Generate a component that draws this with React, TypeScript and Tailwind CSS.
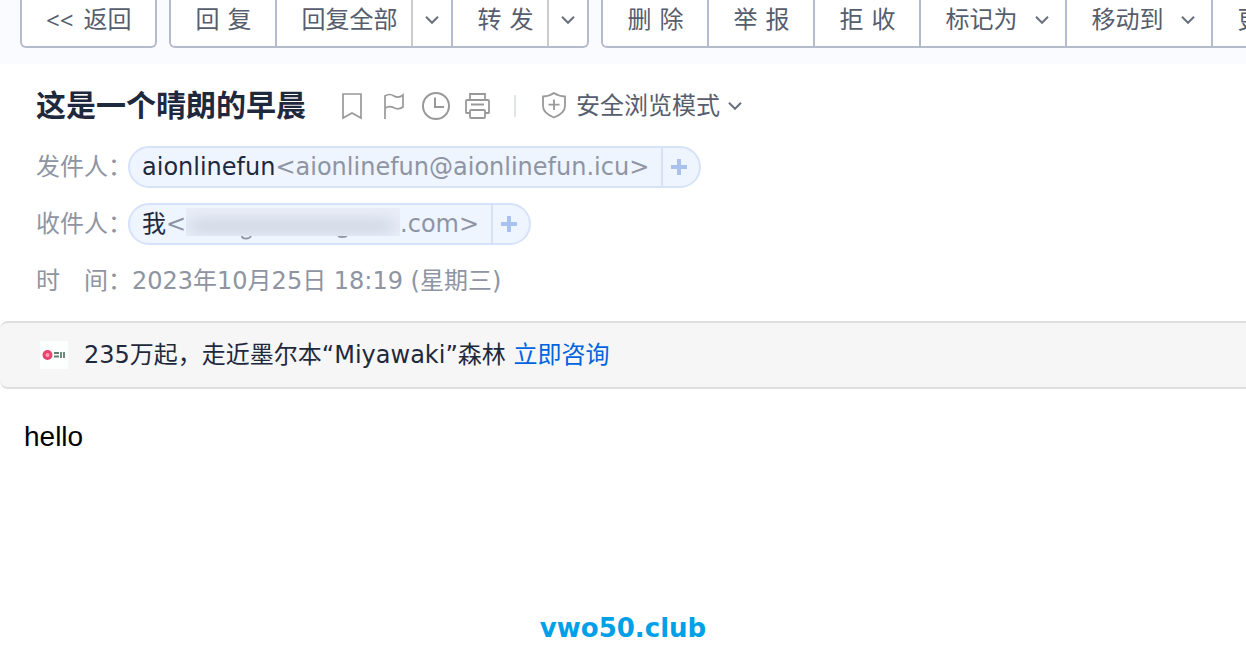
import type { ReactNode } from 'react';

function Chevron() {
  return (
    <svg className="w-3.5 h-2.5 shrink-0" viewBox="0 0 14 10" fill="none" stroke="#697080" strokeWidth={2}>
      <path d="M1 1.8l6 6 6-6" />
    </svg>
  );
}

// Two-character labels are spread apart with a gap
function Label({ text }: { text: string }) {
  return (
    <span className="flex gap-2">
      {text.split(' ').map(part => (
        <span key={part}>{part}</span>
      ))}
    </span>
  );
}

function ToolButton({ label, last }: { label: string; last?: boolean }) {
  return (
    <button
      className={`flex items-center shrink-0 whitespace-nowrap px-6 pb-1.5 ${last ? '' : 'border-r-2 border-[#b4bbcb]'}`}
    >
      <Label text={label} />
    </button>
  );
}

// Button with its own menu arrow, split by a lighter line
function SplitButton({ label, last }: { label: string; last?: boolean }) {
  return (
    <div className={`flex shrink-0 ${last ? '' : 'border-r-2 border-[#b4bbcb]'}`}>
      <button className="flex items-center whitespace-nowrap pl-6 pr-3.5 pb-1.5 border-r-2 border-[#cccccc]">
        <Label text={label} />
      </button>
      <button aria-label={`${label} ▾`} className="flex items-center px-3 pb-1.5">
        <Chevron />
      </button>
    </div>
  );
}

function MenuButton({ label }: { label: string }) {
  return (
    <button className="flex items-center gap-[18px] shrink-0 whitespace-nowrap pl-6 pr-4 pb-1.5 border-r-2 border-[#b4bbcb]">
      {label}
      <Chevron />
    </button>
  );
}

function Chip({ children }: { children: ReactNode }) {
  return (
    <div className="flex h-[42px] rounded-full border-2 border-[#d6e2f7] bg-[#eef5ff] overflow-hidden">
      <div className="flex items-center pl-3 pr-3 whitespace-nowrap">{children}</div>
      <button aria-label="+" className="flex items-center pl-2 pr-3 border-l-2 border-[#d6e2f7]">
        <svg className="w-4 h-4" viewBox="0 0 16 16" stroke="#a9c1ee" strokeWidth={4}>
          <path d="M8 0v16M0 8h16" />
        </svg>
      </button>
    </div>
  );
}

function Row({ label, children }: { label: string; children: ReactNode }) {
  return (
    <div className="flex items-center h-[42px]">
      <dt className="w-[92px] shrink-0 whitespace-nowrap text-[#8e94a2]">{label}</dt>
      <dd>{children}</dd>
    </div>
  );
}

const group = 'flex shrink-0 border-2 border-t-0 border-[#b4bbcb] rounded-b-md bg-white';

export default function App() {
  return (
    <div className="min-h-screen flex flex-col bg-white overflow-hidden text-2xl text-[#1f293d] font-['DejaVu_Sans','Noto_Sans_CJK_SC',sans-serif]">
      <header className="flex gap-3 h-16 pl-5 pb-4 bg-[#fafbfe] text-[#565d6d] overflow-hidden">
        <div className={group}>
          <button className="flex items-center gap-2.5 px-6 pb-1.5 whitespace-nowrap">
            <span className="font-['Noto_Sans',sans-serif]">&lt;&lt;</span>
            <span>返回</span>
          </button>
        </div>
        <div className={group}>
          <ToolButton label="回 复" />
          <SplitButton label="回复全部" />
          <SplitButton label="转 发" last />
        </div>
        <div className={group}>
          <ToolButton label="删 除" />
          <ToolButton label="举 报" />
          <ToolButton label="拒 收" />
          <MenuButton label="标记为" />
          <MenuButton label="移动到" />
          <ToolButton label="更 多" last />
        </div>
      </header>

      <section className="px-9 pt-5 pb-[19px]">
        <div className="flex items-center h-11">
          <h1 className="text-3xl font-bold whitespace-nowrap">这是一个晴朗的早晨</h1>
          <div className="flex items-center gap-3.5 ml-8">
            <button aria-label="书签">
              <svg className="w-7 h-7" viewBox="0 0 28 28" fill="none" stroke="#999" strokeWidth={1.7}>
                <path d="M5 2h18v24l-9-5-9 5z" />
              </svg>
            </button>
            <button aria-label="旗标">
              <svg className="w-7 h-7" viewBox="0 0 28 28" fill="none" stroke="#999" strokeWidth={1.7}>
                <path d="M5 27V4c3-2 6-2 9 0s6 1.500 9-1v12c-3 2-6 2.500-9 .8s-6-1.600-9 .4" />
              </svg>
            </button>
            <button aria-label="时钟">
              <svg className="w-7 h-7" viewBox="0 0 28 28" fill="none" stroke="#999" strokeWidth={2}>
                <circle cx="14" cy="14" r="13" />
                <path d="M13 5.500V15h9" />
              </svg>
            </button>
            <button aria-label="打印">
              <svg className="w-7 h-7" viewBox="0 0 28 28" fill="none" stroke="#999" strokeWidth={1.8}>
                <path d="M6 8V2h15v6M6 21H2.500Q2 21 2 20.500V9q0-1 1-1h21q1 0 1 1v11.500q0 .5-.5.500H21M7 12.500h13" />
                <rect x="6" y="18" width="15" height="8" rx="1" />
              </svg>
            </button>
          </div>
          <span className="w-0.5 h-[22px] ml-[22px] bg-[#e1e4ea]" />
          <button className="flex items-center ml-[26px] text-[#565d6d] whitespace-nowrap">
            <svg className="w-6 h-7 mr-2.5" viewBox="0 0 24 28" fill="none" stroke="#999" strokeWidth={1.8}>
              <path d="M12 1c3.500 2.500 7 3.300 11 3.500V14c0 6-6 9.500-11 11.500C7 23.500 1 20 1 14V4.500C5 4.300 8.500 3.500 12 1zM12 7.500v10.500M6.500 12.700h11" />
            </svg>
            <span className="mr-2">安全浏览模式</span>
            <Chevron />
          </button>
        </div>

        <dl className="flex flex-col gap-[15px] pt-[18px]">
          <Row label="发件人：">
            <Chip>
              <span>aionlinefun</span>
              <span className="text-[#8e94a2]">&lt;aionlinefun@aionlinefun.icu&gt;</span>
            </Chip>
          </Row>
          <Row label="收件人：">
            <Chip>
              <span>我</span>
              <span className="text-[#8e94a2]">&lt;</span>
              <svg className="w-[214px] h-8" viewBox="0 0 214 32">
                <defs>
                  <filter id="smudge" x="-20%" y="-80%" width="140%" height="260%">
                    <feGaussianBlur stdDeviation="9 6" />
                  </filter>
                  <clipPath id="mask">
                    <rect width="214" height="28" />
                  </clipPath>
                </defs>
                <path d="M56 28q0 2.500 4 2.500t5-2.500M152 28q4 2 9 0" fill="none" stroke="#9399a8" strokeWidth={2} />
                <g clipPath="url(#mask)">
                  <rect width="214" height="28" fill="#e8edf8" />
                  <g filter="url(#smudge)" fill="#d4dae6">
                    <rect x="4" y="10" width="136" height="16" />
                    <rect x="135" y="10" width="72" height="16" />
                  </g>
                </g>
              </svg>
              <span className="text-[#8e94a2]">.com&gt;</span>
            </Chip>
          </Row>
          <Row label="时　间：">
            <time className="pl-1 text-[#8e94a2] whitespace-nowrap">2023年10月25日 18:19 (星期三)</time>
          </Row>
        </dl>
      </section>

      <aside className="flex items-center h-[68px] pl-10 border-y-2 border-[#dfdfdf] rounded-l-lg bg-[#f6f6f6] whitespace-nowrap">
        <svg className="w-7 h-7 mr-4" viewBox="0 0 28 28">
          <defs>
            <filter id="soft">
              <feGaussianBlur stdDeviation="0.7" />
            </filter>
          </defs>
          <rect width="28" height="28" fill="#fdfefe" />
          <g filter="url(#soft)">
            <circle cx="7.5" cy="14" r="3.500" fill="#ff9db3" stroke="#f0406e" strokeWidth={3} />
            <path d="M14 12h5M14 15.500h5M21 11v6M24 11v6" stroke="#5f7f72" strokeWidth={1.800} />
          </g>
        </svg>
        <p>
          235万起，走近墨尔本“Miyawaki”森林{' '}
          <a href="#" className="text-[#0064e1]">立即咨询</a>
        </p>
      </aside>

      <main className="px-6 py-7 text-[28px] leading-10 text-black font-['Liberation_Sans',sans-serif]">hello</main>

      <footer className="mt-auto text-center text-[26px] leading-10 font-bold text-[#00a0e9]">vwo50.club</footer>
    </div>
  );
}
